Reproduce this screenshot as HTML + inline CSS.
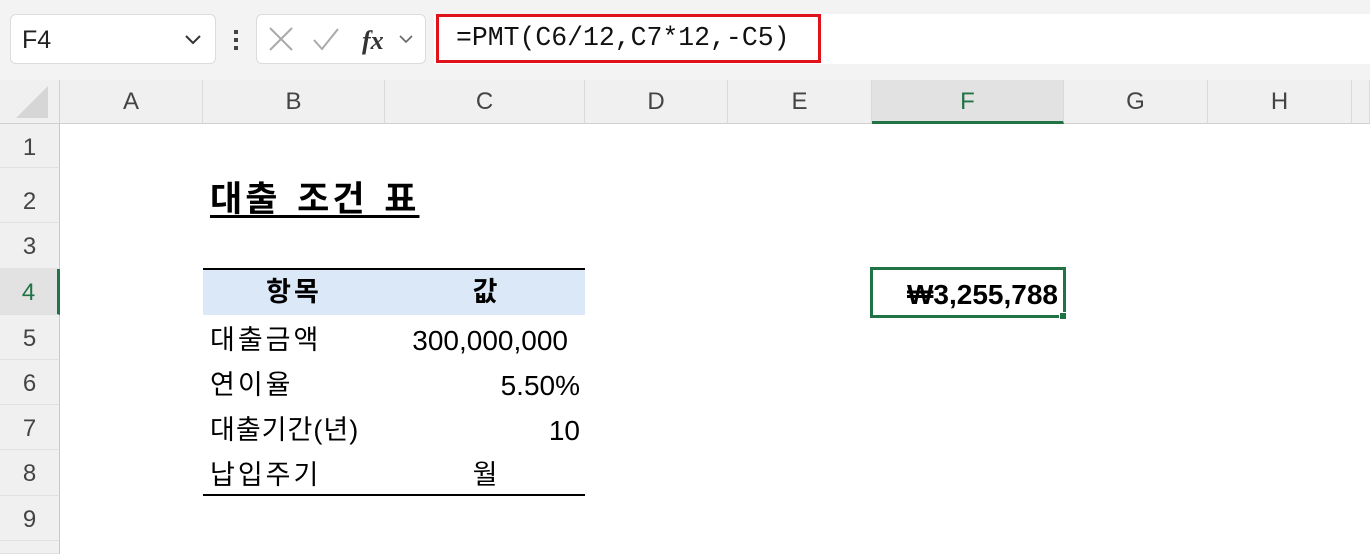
<!DOCTYPE html><html><head><meta charset="utf-8"><style>
*{margin:0;padding:0;box-sizing:border-box}
body{width:1370px;height:554px;overflow:hidden;background:#fff;position:relative;font-family:"Liberation Sans","Noto Sans CJK KR",sans-serif;color:#000}
.a{position:absolute}
.top{left:0;top:0;width:1370px;height:80px;background:#f3f3f3}
.box{background:#fff;border:1px solid #dcdcdc;border-radius:6px}
.ch{top:80px;height:44px;background:#f0f0f0;border-bottom:1px solid #d0d0d0;font-size:24px;color:#444;text-align:center;line-height:44px;border-right:1px solid #dadada}
.rh{left:0;width:60px;background:#f0f0f0;font-size:24px;color:#444;text-align:center;border-bottom:1px solid #e0e0e0;border-right:1px solid #c8c8c8}
.t{font-size:27px;line-height:45px;padding-top:2px}
.k{letter-spacing:3px}
</style></head><body>
<div class="a top"></div>
<div class="a box" style="left:10px;top:14px;width:206px;height:50px"></div>
<div class="a" style="left:22px;top:26px;font-size:25px;color:#222">F4</div>
<svg class="a" style="left:184px;top:34px" width="18" height="12"><path d="M2 2l7 7 7-7" stroke="#333" stroke-width="2" fill="none"/></svg>
<div class="a" style="left:234px;top:30px;width:4px;height:4px;background:#444;box-shadow:0 8px 0 #444,0 16px 0 #444"></div>
<div class="a box" style="left:256px;top:14px;width:170px;height:50px"></div>
<svg class="a" style="left:266px;top:24px" width="150" height="32"><path d="M4 4l22 22M26 4L4 26" stroke="#aaa" stroke-width="2"/><path d="M48 16l8 9 16-20" stroke="#aaa" stroke-width="2" fill="none"/><text x="96" y="25" font-family="Liberation Serif" font-style="italic" font-weight="bold" font-size="26" fill="#333">fx</text><path d="M134 12l6 6 6-6" stroke="#666" stroke-width="1.6" fill="none"/></svg>
<div class="a" style="left:434px;top:14px;width:936px;height:50px;background:#fff"></div>
<div class="a" style="left:436px;top:14px;width:385px;height:49px;border:3px solid #e0131a"></div>
<div class="a" style="left:456px;top:24px;font-family:'Liberation Mono',monospace;font-size:27px;color:#111;transform:scaleX(0.98);transform-origin:left">=PMT(C6/12,C7*12,-C5)</div>
<div class="a" style="left:0;top:80px;width:60px;height:44px;background:#f0f0f0;border-bottom:1px solid #d0d0d0;border-right:1px solid #d0d0d0"></div>
<svg class="a" style="left:12px;top:82px" width="46" height="40"><path d="M36 4L36 36 4 36Z" fill="#d6d6d6"/></svg>
<div class="a ch" style="left:60px;width:143px">A</div>
<div class="a ch" style="left:203px;width:182px">B</div>
<div class="a ch" style="left:385px;width:200px">C</div>
<div class="a ch" style="left:585px;width:143px">D</div>
<div class="a ch" style="left:728px;width:144px">E</div>
<div class="a ch" style="left:872px;width:192px;background:#e2e2e2;color:#217346;border-bottom:3px solid #217346">F</div>
<div class="a ch" style="left:1064px;width:144px">G</div>
<div class="a ch" style="left:1208px;width:144px">H</div>
<div class="a ch" style="left:1352px;width:18px"></div>
<div class="a rh" style="top:124px;height:44px;line-height:48px">1</div>
<div class="a rh" style="top:168px;height:55px;line-height:68px">2</div>
<div class="a rh" style="top:223px;height:46px;line-height:48px">3</div>
<div class="a rh" style="top:269px;height:46px;line-height:48px;background:#e2e2e2;color:#217346;border-right:3px solid #217346">4</div>
<div class="a rh" style="top:315px;height:45px;line-height:48px">5</div>
<div class="a rh" style="top:360px;height:45px;line-height:48px">6</div>
<div class="a rh" style="top:405px;height:45px;line-height:48px">7</div>
<div class="a rh" style="top:450px;height:46px;line-height:48px">8</div>
<div class="a rh" style="top:496px;height:45px;line-height:48px">9</div>
<div class="a rh" style="top:541px;height:13px"></div>
<div class="a" style="left:210px;top:171px;font-size:35px;font-weight:bold;text-decoration:underline;text-decoration-thickness:3px;text-underline-offset:4px;letter-spacing:3px;word-spacing:4px">대출 조건 표</div>
<div class="a" style="left:203px;top:268px;width:382px;height:2px;background:#000"></div>
<div class="a" style="left:203px;top:270px;width:382px;height:45px;background:#dae8f7"></div>
<div class="a t k" style="left:203px;top:268px;width:182px;text-align:center;font-weight:bold">항목</div>
<div class="a t" style="left:385px;top:268px;width:200px;text-align:center;font-weight:bold">값</div>
<div class="a t k" style="left:210px;top:316px">대출금액</div>
<div class="a t" style="left:385px;top:316px;width:183px;text-align:right;font-size:28px">300,000,000</div>
<div class="a t k" style="left:210px;top:361px">연이율</div>
<div class="a t" style="left:385px;top:361px;width:195px;text-align:right;font-size:28px">5.50%</div>
<div class="a t" style="left:210px;top:406px;letter-spacing:1px">대출기간(년)</div>
<div class="a t" style="left:385px;top:406px;width:195px;text-align:right;font-size:28px">10</div>
<div class="a t k" style="left:210px;top:451px">납입주기</div>
<div class="a t" style="left:385px;top:451px;width:200px;text-align:center">월</div>
<div class="a" style="left:203px;top:494px;width:382px;height:2px;background:#000"></div>
<div class="a" style="left:870px;top:267px;width:196px;height:51px;border:3px solid #217346"></div>
<div class="a" style="left:1059px;top:312px;width:8px;height:8px;background:#217346;border:1px solid #fff"></div>
<div class="a t" style="left:872px;top:270px;width:186px;text-align:right;font-weight:bold;font-size:28px">₩3,255,788</div>
</body></html>
